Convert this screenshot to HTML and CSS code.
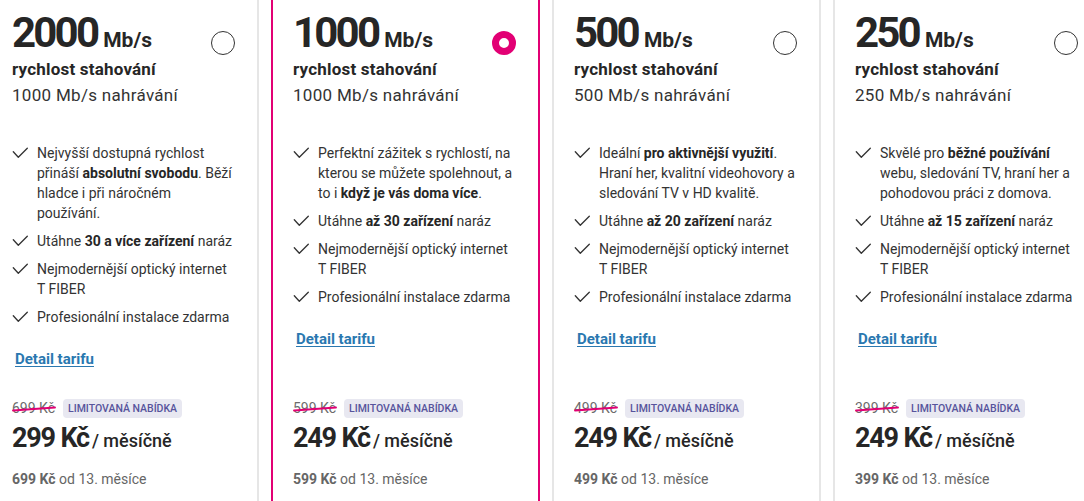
FILE: index.html
```html
<!DOCTYPE html>
<html lang="cs">
<head>
<meta charset="utf-8">
<title>Tarify</title>
<link rel="stylesheet" href="styles.css">
</head>
<body>
<div class="plans">

  <div class="card">
    <div class="head">
      <div class="titles">
        <div class="speed"><span class="num">2000</span><span class="unit">Mb/s</span></div>
        <div class="down">rychlost stahování</div>
        <div class="up">1000 Mb/s nahrávání</div>
      </div>
      <span class="radio"></span>
    </div>
    <ul class="features">
      <li><svg class="check" width="16" height="20" viewBox="0 0 16 20"><path d="M1.3 8.7 L6.3 14.3 L15.3 5.3"/></svg><span>Nejvyšší dostupná rychlost<br>přináší <b>absolutní svobodu</b>. Běží<br>hladce i při náročném<br>používání.</span></li>
      <li><svg class="check" width="16" height="20" viewBox="0 0 16 20"><path d="M1.3 8.7 L6.3 14.3 L15.3 5.3"/></svg><span>Utáhne <b>30 a více zařízení</b> naráz</span></li>
      <li><svg class="check" width="16" height="20" viewBox="0 0 16 20"><path d="M1.3 8.7 L6.3 14.3 L15.3 5.3"/></svg><span>Nejmodernější optický internet<br>T FIBER</span></li>
      <li><svg class="check" width="16" height="20" viewBox="0 0 16 20"><path d="M1.3 8.7 L6.3 14.3 L15.3 5.3"/></svg><span>Profesionální instalace zdarma</span></li>
    </ul>
    <a class="detail" href="#">Detail tarifu</a>
    <div class="price">
      <div class="promo"><span class="old">699 Kč</span><span class="badge">LIMITOVANÁ NABÍDKA</span></div>
      <div class="now"><strong>299 Kč</strong><span class="per">/ měsíčně</span></div>
      <div class="later"><strong>699 Kč</strong> od 13. měsíce</div>
    </div>
  </div>

  <div class="card selected">
    <div class="head">
      <div class="titles">
        <div class="speed"><span class="num">1000</span><span class="unit">Mb/s</span></div>
        <div class="down">rychlost stahování</div>
        <div class="up">1000 Mb/s nahrávání</div>
      </div>
      <span class="radio"></span>
    </div>
    <ul class="features">
      <li><svg class="check" width="16" height="20" viewBox="0 0 16 20"><path d="M1.3 8.7 L6.3 14.3 L15.3 5.3"/></svg><span>Perfektní zážitek s rychlostí, na<br>kterou se můžete spolehnout, a<br>to i <b>když je vás doma více</b>.</span></li>
      <li><svg class="check" width="16" height="20" viewBox="0 0 16 20"><path d="M1.3 8.7 L6.3 14.3 L15.3 5.3"/></svg><span>Utáhne <b>až 30 zařízení</b> naráz</span></li>
      <li><svg class="check" width="16" height="20" viewBox="0 0 16 20"><path d="M1.3 8.7 L6.3 14.3 L15.3 5.3"/></svg><span>Nejmodernější optický internet<br>T FIBER</span></li>
      <li><svg class="check" width="16" height="20" viewBox="0 0 16 20"><path d="M1.3 8.7 L6.3 14.3 L15.3 5.3"/></svg><span>Profesionální instalace zdarma</span></li>
    </ul>
    <a class="detail" href="#">Detail tarifu</a>
    <div class="price">
      <div class="promo"><span class="old">599 Kč</span><span class="badge">LIMITOVANÁ NABÍDKA</span></div>
      <div class="now"><strong>249 Kč</strong><span class="per">/ měsíčně</span></div>
      <div class="later"><strong>599 Kč</strong> od 13. měsíce</div>
    </div>
  </div>

  <div class="card">
    <div class="head">
      <div class="titles">
        <div class="speed"><span class="num">500</span><span class="unit">Mb/s</span></div>
        <div class="down">rychlost stahování</div>
        <div class="up">500 Mb/s nahrávání</div>
      </div>
      <span class="radio"></span>
    </div>
    <ul class="features">
      <li><svg class="check" width="16" height="20" viewBox="0 0 16 20"><path d="M1.3 8.7 L6.3 14.3 L15.3 5.3"/></svg><span>Ideální <b>pro aktivnější využití</b>.<br>Hraní her, kvalitní videohovory a<br>sledování TV v HD kvalitě.</span></li>
      <li><svg class="check" width="16" height="20" viewBox="0 0 16 20"><path d="M1.3 8.7 L6.3 14.3 L15.3 5.3"/></svg><span>Utáhne <b>až 20 zařízení</b> naráz</span></li>
      <li><svg class="check" width="16" height="20" viewBox="0 0 16 20"><path d="M1.3 8.7 L6.3 14.3 L15.3 5.3"/></svg><span>Nejmodernější optický internet<br>T FIBER</span></li>
      <li><svg class="check" width="16" height="20" viewBox="0 0 16 20"><path d="M1.3 8.7 L6.3 14.3 L15.3 5.3"/></svg><span>Profesionální instalace zdarma</span></li>
    </ul>
    <a class="detail" href="#">Detail tarifu</a>
    <div class="price">
      <div class="promo"><span class="old">499 Kč</span><span class="badge">LIMITOVANÁ NABÍDKA</span></div>
      <div class="now"><strong>249 Kč</strong><span class="per">/ měsíčně</span></div>
      <div class="later"><strong>499 Kč</strong> od 13. měsíce</div>
    </div>
  </div>

  <div class="card">
    <div class="head">
      <div class="titles">
        <div class="speed"><span class="num">250</span><span class="unit">Mb/s</span></div>
        <div class="down">rychlost stahování</div>
        <div class="up">250 Mb/s nahrávání</div>
      </div>
      <span class="radio"></span>
    </div>
    <ul class="features">
      <li><svg class="check" width="16" height="20" viewBox="0 0 16 20"><path d="M1.3 8.7 L6.3 14.3 L15.3 5.3"/></svg><span>Skvělé pro <b>běžné používání</b><br>webu, sledování TV, hraní her a<br>pohodovou práci z domova.</span></li>
      <li><svg class="check" width="16" height="20" viewBox="0 0 16 20"><path d="M1.3 8.7 L6.3 14.3 L15.3 5.3"/></svg><span>Utáhne <b>až 15 zařízení</b> naráz</span></li>
      <li><svg class="check" width="16" height="20" viewBox="0 0 16 20"><path d="M1.3 8.7 L6.3 14.3 L15.3 5.3"/></svg><span>Nejmodernější optický internet<br>T FIBER</span></li>
      <li><svg class="check" width="16" height="20" viewBox="0 0 16 20"><path d="M1.3 8.7 L6.3 14.3 L15.3 5.3"/></svg><span>Profesionální instalace zdarma</span></li>
    </ul>
    <a class="detail" href="#">Detail tarifu</a>
    <div class="price">
      <div class="promo"><span class="old">399 Kč</span><span class="badge">LIMITOVANÁ NABÍDKA</span></div>
      <div class="now"><strong>249 Kč</strong><span class="per">/ měsíčně</span></div>
      <div class="later"><strong>399 Kč</strong> od 13. měsíce</div>
    </div>
  </div>

</div>
</body>
</html>
```

FILE: styles.css
```css
html, body {
  margin: 0;
  padding: 0;
  background: #ffffff;
  overflow: hidden;
}

body {
  font-family: Roboto, "Liberation Sans", Arial, sans-serif;
  color: #262626;
}

.plans {
  display: flex;
  gap: 12px;
  margin: -30px 0 0 -10px;
}

.card {
  flex: none;
  width: 269px;
  box-sizing: border-box;
  border: 2px solid #e6e6e6;
  border-radius: 8px;
  padding: 37px 20px 40px;
  display: flex;
  flex-direction: column;
}

.card.selected {
  border-color: #e20074;
}

.head {
  display: flex;
  justify-content: space-between;
  align-items: flex-start;
}

.speed {
  font-size: 42px;
  line-height: 48px;
  font-weight: 700;
  color: #262626;
}

.num {
  letter-spacing: -2.8px;
}

.unit {
  font-size: 21px;
  line-height: 1;
  margin-left: 6px;
}

.down {
  font-size: 17px;
  line-height: 24px;
  font-weight: 700;
  letter-spacing: 0.2px;
}

.up {
  font-size: 17px;
  line-height: 28px;
  letter-spacing: 0.3px;
  color: #333333;
}

.radio {
  flex: none;
  width: 24px;
  height: 24px;
  box-sizing: border-box;
  border: 1px solid #333333;
  border-radius: 50%;
  margin: 22px 2px 0 0;
  background: #ffffff;
}

.selected .radio {
  border: 7.5px solid #e20074;
}

.features {
  list-style: none;
  margin: 34px 0 0;
  padding: 0;
  display: flex;
  flex-direction: column;
  gap: 8px;
}

.features li {
  display: flex;
  gap: 9px;
  font-size: 14px;
  line-height: 20px;
  color: #333333;
}

.features b {
  font-weight: 700;
  color: #262626;
}

.check {
  flex: none;
}

.check path {
  fill: none;
  stroke: #333333;
  stroke-width: 1.3;
  stroke-linecap: round;
  stroke-linejoin: round;
}

.detail {
  align-self: flex-start;
  margin: 22px 0 29px 3px;
  font-size: 15px;
  line-height: 20px;
  font-weight: 700;
  color: #2a78b0;
  text-decoration: underline;
  text-underline-offset: 2px;
}

.price {
  margin-top: auto;
  display: flex;
  flex-direction: column;
}

.promo {
  display: flex;
  align-items: center;
  gap: 8px;
  height: 20px;
}

.old {
  position: relative;
  font-size: 14px;
  line-height: 20px;
  color: #6b6b6b;
}

.old::after {
  content: "";
  position: absolute;
  left: 0;
  right: -1px;
  top: 10px;
  height: 2px;
  border-radius: 1px;
  background: #e20074;
  transform: rotate(-4deg);
}

.badge {
  font-size: 10.5px;
  line-height: 19px;
  font-weight: 500;
  color: #57549c;
  background: #e8e8f1;
  border-radius: 4px;
  padding: 0 5px;
}

.now {
  margin-top: 4px;
  line-height: 32px;
}

.now strong {
  font-size: 27px;
  font-weight: 700;
  letter-spacing: -1.2px;
}

.per {
  font-size: 18px;
  font-weight: 500;
  margin-left: 3px;
}

.later {
  margin-top: 11px;
  font-size: 14px;
  line-height: 20px;
  color: #666666;
}

.later strong {
  font-weight: 700;
}
```
